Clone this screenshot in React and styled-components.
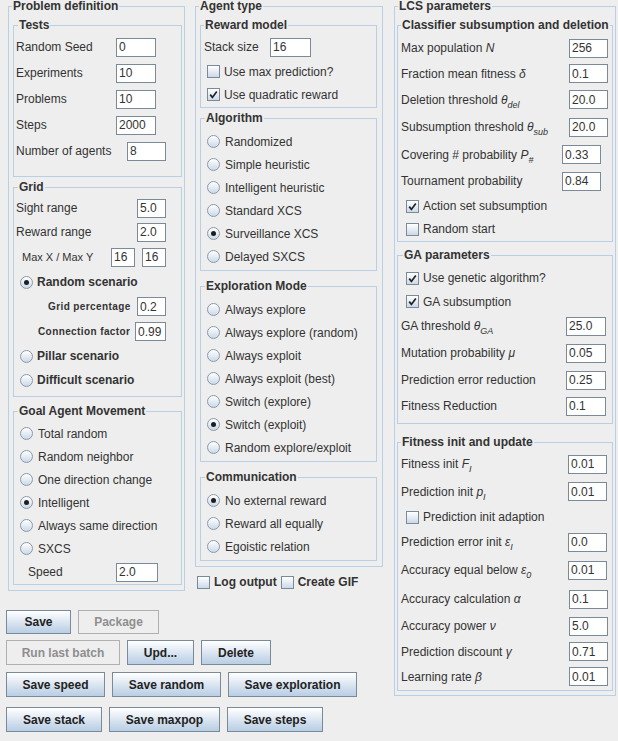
import styled, { createGlobalStyle } from "styled-components";

const GlobalStyle = createGlobalStyle`
  html, body {
    margin: 0;
    padding: 0;
    background: #eeeeee;
  }
  body {
    font-family: "Liberation Sans", Arial, sans-serif;
    font-size: 12px;
    color: #333333;
  }
`;

const Page = styled.div`
  width: 618px;
  height: 741px;
  box-sizing: border-box;
  padding-left: 6px;
  display: flex;
  align-items: flex-start;
  background: #eeeeee;
  overflow: hidden;
`;

const LeftArea = styled.div`
  width: 377px;
  display: flex;
  flex-direction: column;
  flex-shrink: 0;
`;

const Columns = styled.div`
  display: flex;
  align-items: flex-start;
  gap: 10px;
  padding-left: 2px;
`;

const Stack = styled.div`
  display: flex;
  flex-direction: column;
`;

const RightArea = styled.div`
  margin-left: 11px;
  flex-shrink: 0;
`;

const Frame = styled.div`
  display: flex;
  flex-direction: column;
  box-sizing: border-box;
  border: 1px solid #b8cfe5;
  margin-top: ${(p) => p.$mt || 0}px;
  width: ${(p) => (p.$w ? `${p.$w}px` : "auto")};
`;

const Caption = styled.span`
  align-self: flex-start;
  margin: -7px 0 0 ${(p) => p.$x ?? 3}px;
  padding: 0 1px;
  background: #eeeeee;
  font-weight: bold;
  font-size: 12px;
  line-height: 13px;
  color: #333333;
  white-space: nowrap;
`;

const Body = styled.div`
  display: flex;
  flex-direction: column;
  padding: ${(p) => p.$pad};
`;

const Row = styled.div`
  display: flex;
  align-items: center;
  flex-shrink: 0;
  height: ${(p) => p.$h || 26}px;
  padding-left: ${(p) => p.$pl || 0}px;
  margin-top: ${(p) => p.$mt || 0}px;
  gap: ${(p) => p.$gap || 0}px;
`;

const Label = styled.span`
  flex-shrink: 0;
  white-space: nowrap;
  width: ${(p) => (p.$w ? `${p.$w}px` : "auto")};
  margin-left: ${(p) => p.$ml || 0}px;
  font-size: ${(p) => p.$size || 12}px;
  font-weight: ${(p) => (p.$bold ? "bold" : "normal")};
  letter-spacing: ${(p) => (p.$size === 10 ? "0.4px" : "0")};
  color: #333333;
`;

const Sym = styled.i`
  font-style: italic;
`;

const Sub = styled.sub`
  font-size: 9px;
  font-style: italic;
  vertical-align: -4px;
  line-height: 0;
`;

const TextBox = styled.input.attrs({ type: "text", readOnly: true })`
  width: ${(p) => p.$w}px;
  height: 19px;
  box-sizing: border-box;
  flex-shrink: 0;
  margin: 0;
  padding: 0 0 0 2px;
  border: 1px solid #7a8a99;
  border-radius: 0;
  background: #ffffff;
  font: 12px "Liberation Sans", Arial, sans-serif;
  color: #333333;
  outline: none;
`;

const RadioDot = styled.span`
  width: 13px;
  height: 13px;
  box-sizing: border-box;
  flex-shrink: 0;
  border-radius: 50%;
  border: 1px solid #8a9aab;
  background: linear-gradient(#ffffff, #cbd9e8);
  display: flex;
  align-items: center;
  justify-content: center;

  &::after {
    content: "";
    display: ${(p) => (p.$on ? "block" : "none")};
    width: 5px;
    height: 5px;
    border-radius: 50%;
    background: #1e1e1e;
  }
`;

const CheckItem = styled.span`
  display: inline-flex;
  align-items: center;
`;

const CheckBox = styled.span`
  width: 13px;
  height: 13px;
  box-sizing: border-box;
  flex-shrink: 0;
  border: 1px solid #7a8a99;
  background: linear-gradient(#ffffff, #cbd9e8);
  display: flex;
  align-items: center;
  justify-content: center;
`;

const ButtonRow = styled.div`
  display: flex;
  gap: 7px;
  margin-top: ${(p) => p.$mt}px;
`;

const Button = styled.button`
  width: ${(p) => p.$w}px;
  height: ${(p) => p.$h || 25}px;
  box-sizing: border-box;
  margin: 0;
  padding: 0;
  border: 1px solid ${(p) => (p.disabled ? "#b0b0b0" : "#7a8a99")};
  border-radius: 0;
  background: ${(p) =>
    p.disabled
      ? "#eeeeee"
      : "linear-gradient(#ffffff 0%, #eaf0f7 30%, #c9d9ea 75%, #b8cfe5 100%)"};
  font: bold 12px "Liberation Sans", Arial, sans-serif;
  color: ${(p) => (p.disabled ? "#8e8e8e" : "#222222")};
`;

const Group = ({ title, mt, w, pad, cx, children }) => (
  <Frame $mt={mt} $w={w}>
    <Caption $x={cx}>{title}</Caption>
    <Body $pad={pad}>{children}</Body>
  </Frame>
);

const Field = ({ h, pl, lw, iw, size, value, children }) => (
  <Row $h={h} $pl={pl}>
    <Label $w={lw} $size={size} $bold={size === 10}>
      {children}
    </Label>
    <TextBox $w={iw} defaultValue={value} />
  </Row>
);

const Choice = ({ h = 23, pl = 4, on, bold, gap = 4, children }) => (
  <Row $h={h} $pl={pl}>
    <RadioDot $on={on} />
    <Label $ml={gap} $bold={bold}>
      {children}
    </Label>
  </Row>
);

const CheckMark = () => (
  <svg width="9" height="9" viewBox="0 0 9 9">
    <path d="M1.2 4.6 L3.4 7.4 L7.8 1.4" fill="none" stroke="#222" strokeWidth="1.7" />
  </svg>
);

const Check = ({ on, bold, children }) => (
  <CheckItem>
    <CheckBox>{on && <CheckMark />}</CheckBox>
    <Label $ml={4} $bold={bold}>
      {children}
    </Label>
  </CheckItem>
);

const CheckRow = ({ h = 23, pl, on, children }) => (
  <Row $h={h} $pl={pl}>
    <Check on={on}>{children}</Check>
  </Row>
);

const ProblemPanel = () => (
  <Group title="Problem definition" mt={6} w={177} pad="0 2px 5px 4px" cx={3}>
    <Group title="Tests" mt={12} pad="2px 0 12px 2px" cx={4}>
      <Field lw={100} iw={40} value="0">Random Seed</Field>
      <Field lw={100} iw={40} value="10">Experiments</Field>
      <Field lw={100} iw={40} value="10">Problems</Field>
      <Field lw={100} iw={40} value="2000">Steps</Field>
      <Field lw={111} iw={39} value="8">Number of agents</Field>
    </Group>
    <Group title="Grid" mt={10} pad="2px 0 4px 2px" cx={4}>
      <Field h={24} lw={121} iw={29} value="5.0">Sight range</Field>
      <Field h={24} lw={121} iw={29} value="2.0">Reward range</Field>
      <Row $h={26} $pl={6}>
        <Label $w={89} $size={11}>Max X / Max Y</Label>
        <TextBox $w={24} defaultValue="16" />
        <Label $w={7} />
        <TextBox $w={24} defaultValue="16" />
      </Row>
      <Choice h={24} on bold>Random scenario</Choice>
      <Field h={25} pl={32} lw={89} iw={29} size={10} value="0.2">Grid percentage</Field>
      <Field h={25} pl={22} lw={97} iw={31} size={10} value="0.99">Connection factor</Field>
      <Choice h={24} bold>Pillar scenario</Choice>
      <Choice h={24} bold>Difficult scenario</Choice>
    </Group>
    <Group title="Goal Agent Movement" mt={14} pad="4px 0 0 2px" cx={4}>
      <Choice gap={5}>Total random</Choice>
      <Choice gap={5}>Random neighbor</Choice>
      <Choice gap={5}>One direction change</Choice>
      <Choice gap={5} on>Intelligent</Choice>
      <Choice gap={5}>Always same direction</Choice>
      <Choice gap={5}>SXCS</Choice>
      <Field h={24} pl={12} lw={88} iw={42} value="2.0">Speed</Field>
    </Group>
  </Group>
);

const AgentPanel = () => (
  <Stack>
    <Group title="Agent type" mt={6} w={188} pad="0 5px 5px 4px" cx={3}>
      <Group title="Reward model" mt={12} pad="2px 0 1px 3px" cx={3}>
        <Field lw={66} iw={41} value="16">Stack size</Field>
        <CheckRow pl={3}>Use max prediction?</CheckRow>
        <CheckRow pl={3} on>Use quadratic reward</CheckRow>
      </Group>
      <Group title="Algorithm" mt={10} pad="5px 0 2px 3px" cx={4}>
        <Choice pl={3} gap={5}>Randomized</Choice>
        <Choice pl={3} gap={5}>Simple heuristic</Choice>
        <Choice pl={3} gap={5}>Intelligent heuristic</Choice>
        <Choice pl={3} gap={5}>Standard XCS</Choice>
        <Choice pl={3} gap={5} on>Surveillance XCS</Choice>
        <Choice pl={3} gap={5}>Delayed SXCS</Choice>
      </Group>
      <Group title="Exploration Mode" mt={15} pad="5px 0 2px 3px" cx={4}>
        <Choice pl={3} gap={5}>Always explore</Choice>
        <Choice pl={3} gap={5}>Always explore (random)</Choice>
        <Choice pl={3} gap={5}>Always exploit</Choice>
        <Choice pl={3} gap={5}>Always exploit (best)</Choice>
        <Choice pl={3} gap={5}>Switch (explore)</Choice>
        <Choice pl={3} gap={5} on>Switch (exploit)</Choice>
        <Choice pl={3} gap={5}>Random explore/exploit</Choice>
      </Group>
      <Group title="Communication" mt={15} pad="5px 0 2px 3px" cx={4}>
        <Choice pl={3} gap={5} on>No external reward</Choice>
        <Choice pl={3} gap={5}>Reward all equally</Choice>
        <Choice pl={3} gap={5}>Egoistic relation</Choice>
      </Group>
    </Group>
    <Row $h={22} $pl={2} $gap={4} $mt={4}>
      <Check bold>Log output</Check>
      <Check bold>Create GIF</Check>
    </Row>
  </Stack>
);

const LcsPanel = () => (
  <Group title="LCS parameters" mt={6} w={222} pad="0 2px 4px 2px" cx={3}>
    <Group title="Classifier subsumption and deletion" mt={12} pad="3px 0 1px 3px" cx={3}>
      <Field h={26} lw={168} iw={39} value="256">
        Max population <Sym>N</Sym>
      </Field>
      <Field h={25} lw={168} iw={39} value="0.1">
        Fraction mean fitness <Sym>δ</Sym>
      </Field>
      <Field h={27} lw={168} iw={39} value="20.0">
        Deletion threshold <Sym>θ</Sym>
        <Sub>del</Sub>
      </Field>
      <Field h={28} lw={168} iw={39} value="20.0">
        Subsumption threshold <Sym>θ</Sym>
        <Sub>sub</Sub>
      </Field>
      <Field h={27} lw={161} iw={39} value="0.33">
        Covering # probability <Sym>P</Sym>
        <Sub>#</Sub>
      </Field>
      <Field h={26} lw={161} iw={39} value="0.84">
        Tournament probability
      </Field>
      <CheckRow h={24} pl={5} on>Action set subsumption</CheckRow>
      <CheckRow h={22} pl={5}>Random start</CheckRow>
    </Group>
    <Group title="GA parameters" mt={13} pad="4px 0 4px 3px" cx={5}>
      <CheckRow h={24} pl={5} on>Use genetic algorithm?</CheckRow>
      <CheckRow h={23} pl={5} on>GA subsumption</CheckRow>
      <Field h={26} lw={165} iw={40} value="25.0">
        GA threshold <Sym>θ</Sym>
        <Sub>GA</Sub>
      </Field>
      <Field h={28} lw={165} iw={40} value="0.05">
        Mutation probability <Sym>μ</Sym>
      </Field>
      <Field h={26} lw={165} iw={40} value="0.25">
        Prediction error reduction
      </Field>
      <Field h={26} lw={165} iw={40} value="0.1">
        Fitness Reduction
      </Field>
    </Group>
    <Group title="Fitness init and update" mt={18} pad="1px 0 1px 3px" cx={3}>
      <Field h={28} lw={167} iw={39} value="0.01">
        Fitness init <Sym>F</Sym>
        <Sub>I</Sub>
      </Field>
      <Field h={27} lw={167} iw={39} value="0.01">
        Prediction init <Sym>p</Sym>
        <Sub>I</Sub>
      </Field>
      <CheckRow h={24} pl={5}>Prediction init adaption</CheckRow>
      <Field h={26} lw={167} iw={39} value="0.0">
        Prediction error init <Sym>ε</Sym>
        <Sub>I</Sub>
      </Field>
      <Field h={30} lw={167} iw={39} value="0.01">
        Accuracy equal below <Sym>ε</Sym>
        <Sub>0</Sub>
      </Field>
      <Field h={28} lw={168} iw={39} value="0.1">
        Accuracy calculation <Sym>α</Sym>
      </Field>
      <Field h={26} lw={168} iw={39} value="5.0">
        Accuracy power <Sym>ν</Sym>
      </Field>
      <Field h={25} lw={168} iw={39} value="0.71">
        Prediction discount <Sym>γ</Sym>
      </Field>
      <Field h={25} lw={168} iw={39} value="0.01">
        Learning rate <Sym>β</Sym>
      </Field>
    </Group>
  </Group>
);

const App = () => (
  <>
    <GlobalStyle />
    <Page>
      <LeftArea>
        <Columns>
          <ProblemPanel />
          <AgentPanel />
        </Columns>
        <ButtonRow $mt={17}>
          <Button $w={65} $h={24}>Save</Button>
          <Button $w={81} $h={24} disabled>Package</Button>
        </ButtonRow>
        <ButtonRow $mt={6}>
          <Button $w={114} disabled>Run last batch</Button>
          <Button $w={67}>Upd...</Button>
          <Button $w={70}>Delete</Button>
        </ButtonRow>
        <ButtonRow $mt={7}>
          <Button $w={99}>Save speed</Button>
          <Button $w={109}>Save random</Button>
          <Button $w={129}>Save exploration</Button>
        </ButtonRow>
        <ButtonRow $mt={10}>
          <Button $w={96}>Save stack</Button>
          <Button $w={111}>Save maxpop</Button>
          <Button $w={96}>Save steps</Button>
        </ButtonRow>
      </LeftArea>
      <RightArea>
        <LcsPanel />
      </RightArea>
    </Page>
  </>
);

export default App;
